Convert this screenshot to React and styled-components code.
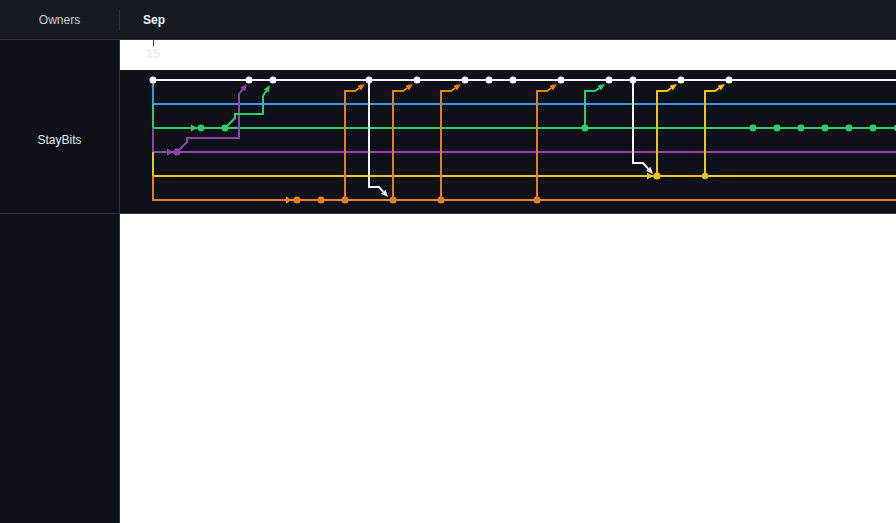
import styled, { createGlobalStyle } from "styled-components"

const GlobalStyle = createGlobalStyle`
    html, body {
        margin: 0;
        padding: 0;
        background: #ffffff;
    }
    body {
        font-family: "Liberation Sans", Arial, sans-serif;
    }
`

const Page = styled.div`
    display: flex;
    flex-direction: column;
    min-height: 100vh;
    width: 100%;
    overflow: hidden;
`

const Header = styled.div`
    display: flex;
    align-items: center;
    height: 39px;
    background: #161b22;
    border-bottom: 1px solid #30363d;
    flex-shrink: 0;
`

const OwnersCell = styled.div`
    width: 119px;
    height: 20px;
    display: flex;
    align-items: center;
    justify-content: center;
    border-right: 1px solid #30363d;
    color: #c9d1d9;
    font-size: 12px;
`

const MonthCell = styled.div`
    padding-left: 23px;
    color: #f0f6fc;
    font-size: 12px;
    font-weight: 700;
`

const Body = styled.div`
    display: flex;
    flex-direction: column;
    flex: 1;
`

const Row = styled.div`
    display: flex;
    border-bottom: 1px solid #30363d;
`

const OwnerName = styled.div`
    width: 119px;
    flex-shrink: 0;
    background: #0d1117;
    border-right: 1px solid #30363d;
    display: flex;
    align-items: center;
    justify-content: center;
    padding-top: 27px;
    color: #e6edf3;
    font-size: 12px;
`

const Timeline = styled.div`
    flex: 1;
    display: flex;
    flex-direction: column;
    min-width: 0;
`

const DayScale = styled.div`
    position: relative;
    height: 30px;
    background: #ffffff;
`

const Tick = styled.div`
    position: absolute;
    left: ${p => p.$x}px;
    top: 0;
    width: 1px;
    height: 6px;
    background: #30363d;
`

const DayLabel = styled.div`
    position: absolute;
    left: ${p => p.$x - 12}px;
    top: 6px;
    width: 24px;
    text-align: center;
    color: #e8edf3;
    font-size: 13px;
    font-weight: 700;
`

const Graph = styled.div`
    height: 143px;
    background: #0d1117;
    overflow: hidden;

    svg {
        display: block;
    }
`

const Filler = styled.div`
    flex: 1;
    display: flex;
`

const FillerSide = styled.div`
    width: 119px;
    background: #0d1117;
    border-right: 1px solid #30363d;
`

const C = {
    white: "#f0f6fc",
    blue: "#3498db",
    green: "#2ecc71",
    purple: "#8e44ad",
    yellow: "#f1c40f",
    orange: "#e67e22",
}

const lanes = [
    { color: C.blue, from: 79, y: 103 },
    { color: C.green, from: 103, y: 127 },
    { color: C.purple, from: 127, y: 151 },
    { color: C.yellow, from: 151, y: 175 },
    { color: C.orange, from: 175, y: 199 },
]

// connectors ending in an arrow: the last point is the arrow tip
const links = [
    { color: C.purple, pts: [[177, 151], [187, 141], [187, 137], [239, 137], [239, 93], [247, 83]] },
    { color: C.green, pts: [[225, 127], [235, 117], [235, 113], [263, 113], [263, 95], [270, 84]] },
    ...[345, 393, 441, 537].map(x => ({ color: C.orange, pts: [[x, 199], [x, 90], [x + 10, 90], [x + 20, 83]] })),
    { color: C.green, pts: [[585, 127], [585, 90], [595, 90], [605, 83]] },
    ...[657, 705].map(x => ({ color: C.yellow, pts: [[x, 175], [x, 90], [x + 10, 90], [x + 20, 83]] })),
    { color: C.white, pts: [[369, 79], [369, 186], [379, 186], [388, 196]] },
    { color: C.white, pts: [[633, 79], [633, 162], [643, 162], [653, 173]] },
]

const entries = [
    { color: C.purple, x: 173, y: 151 },
    { color: C.green, x: 197, y: 127 },
    { color: C.orange, x: 292, y: 199 },
    { color: C.yellow, x: 653, y: 175 },
]

const dots = [
    ...[153, 249, 273, 369, 417, 465, 489, 513, 561, 609, 633, 681, 729].map(x => ({ x, y: 79, color: C.white, r: 3.5 })),
    ...[201, 225, 585, 753, 777, 801, 825, 849, 873, 897].map(x => ({ x, y: 127, color: C.green, r: 3.4 })),
    { x: 177, y: 151, color: C.purple, r: 3.5 },
    { x: 657, y: 175, color: C.yellow, r: 3.6 },
    { x: 705, y: 175, color: C.yellow, r: 3.2 },
    ...[297, 321, 345, 393, 441, 537].map(x => ({ x, y: 199, color: C.orange, r: 3.6 })),
]

function arrowHead(from, to, len = 7, half = 3) {
    const dx = to[0] - from[0]
    const dy = to[1] - from[1]
    const d = Math.hypot(dx, dy) || 1
    const ux = dx / d
    const uy = dy / d
    const bx = to[0] - ux * len
    const by = to[1] - uy * len
    return {
        base: [bx, by],
        points: `${to[0]},${to[1]} ${bx - uy * half},${by + ux * half} ${bx + uy * half},${by - ux * half}`,
    }
}

function CommitGraph() {
    return (
        <svg width="776" height="143" viewBox="120 69 776 143">
            <path d="M153 79 H900" stroke={C.white} strokeWidth="2" fill="none" />
            {lanes.map((l, i) => (
                <path key={"lane" + i} d={`M153 ${l.from} V${l.y} H900`} stroke={l.color} strokeWidth="2" fill="none" />
            ))}
            {links.map((l, i) => {
                const n = l.pts.length
                const head = arrowHead(l.pts[n - 2], l.pts[n - 1])
                const pts = [...l.pts.slice(0, n - 1), head.base]
                const d = pts.map((p, j) => (j ? "L" : "M") + p[0] + " " + p[1]).join(" ")
                return (
                    <g key={"link" + i}>
                        <path d={d} stroke={l.color} strokeWidth="2" fill="none" />
                        <polygon points={head.points} fill={l.color} />
                    </g>
                )
            })}
            {entries.map((e, i) => (
                <polygon key={"entry" + i} points={`${e.x},${e.y} ${e.x - 6},${e.y - 3.5} ${e.x - 6},${e.y + 3.5}`} fill={e.color} />
            ))}
            {dots.map((d, i) => (
                <circle key={"dot" + i} cx={d.x} cy={d.y} r={d.r} fill={d.color} />
            ))}
        </svg>
    )
}

export default function App() {
    return (
        <>
            <GlobalStyle />
            <Page>
                <Header>
                    <OwnersCell>Owners</OwnersCell>
                    <MonthCell>Sep</MonthCell>
                </Header>
                <Body>
                    <Row>
                        <OwnerName>StayBits</OwnerName>
                        <Timeline>
                            <DayScale>
                                <Tick $x={33} />
                                <DayLabel $x={33}>15</DayLabel>
                            </DayScale>
                            <Graph>
                                <CommitGraph />
                            </Graph>
                        </Timeline>
                    </Row>
                    <Filler>
                        <FillerSide />
                    </Filler>
                </Body>
            </Page>
        </>
    )
}
